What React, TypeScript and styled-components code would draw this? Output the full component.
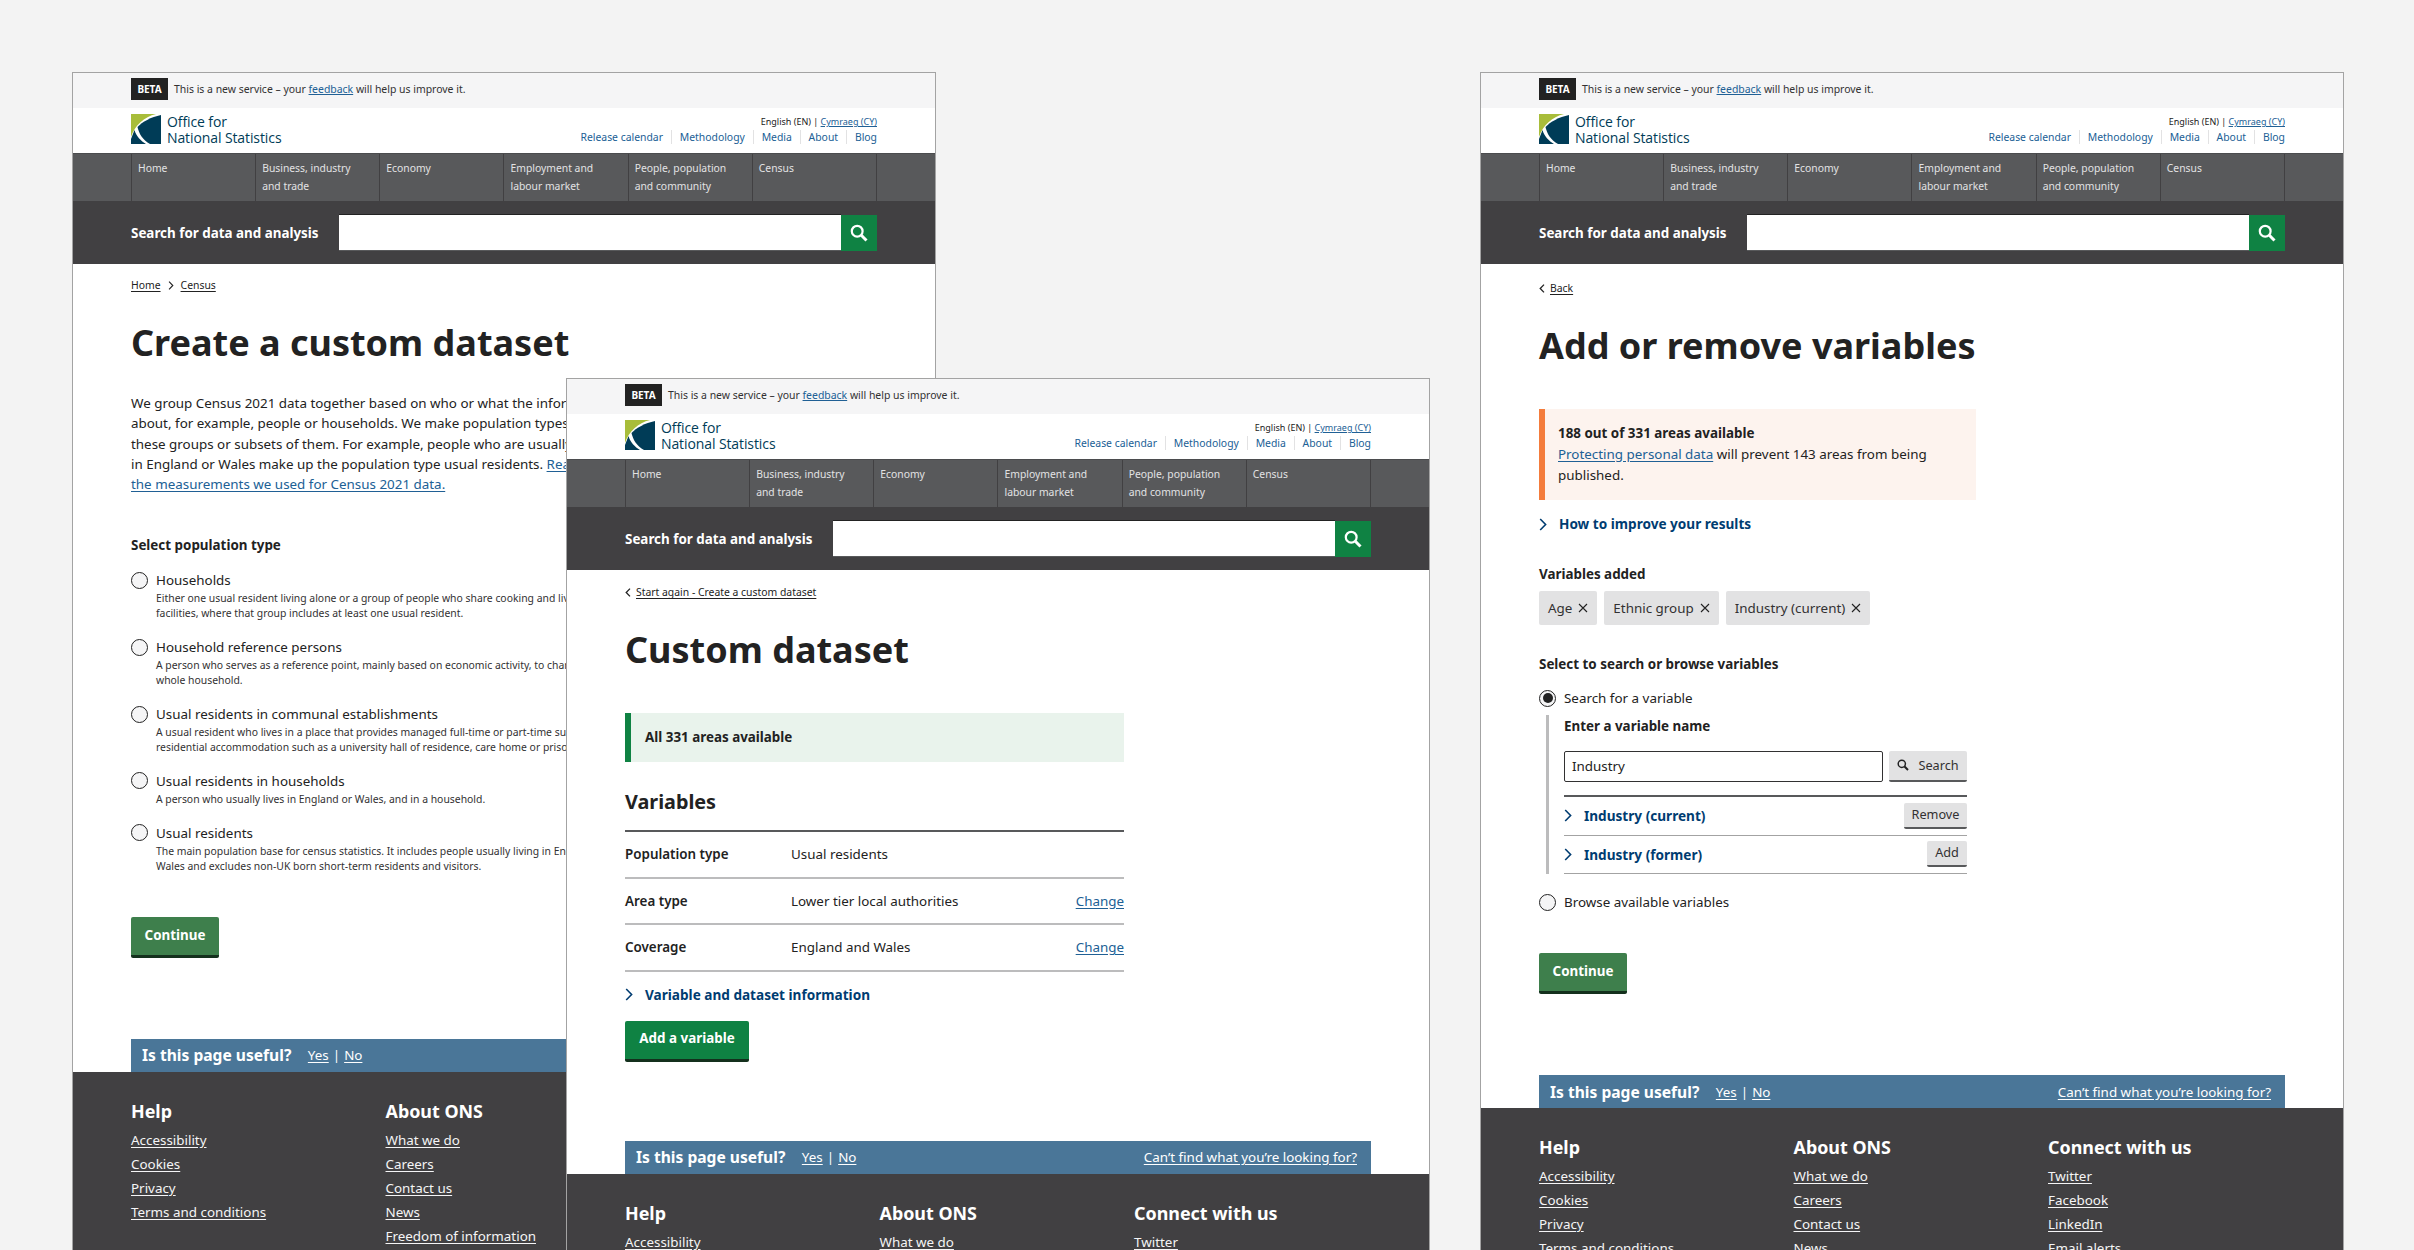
import React from "react";
import styled, { createGlobalStyle } from "styled-components";

const GlobalStyle = createGlobalStyle`
  html, body {
    margin: 0;
    height: 1250px;
    overflow: hidden;
    background: #f3f3f3;
    font-family: "Noto Sans", "Open Sans", Arial, sans-serif;
    color: #222222;
  }
  * { box-sizing: border-box; }
`;

const Canvas = styled.div`
  position: relative;
  width: 2414px;
  height: 1250px;
  overflow: hidden;
`;

const Window = styled.section<{ $left: number; $top: number; $z: number }>`
  position: absolute;
  left: ${(p) => p.$left}px;
  top: ${(p) => p.$top}px;
  z-index: ${(p) => p.$z};
  width: 864px;
  display: flex;
  flex-direction: column;
  background: #fff;
  border: 1px solid #a3a3a3;
`;

const BetaBar = styled.div`
  height: 35px;
  padding: 5px 58px 0;
  background: #f5f5f6;
  display: flex;
  align-items: flex-start;
  gap: 6px;
  font-size: 10.45px;
  line-height: 22px;
  color: #323132;
`;

const BetaBadge = styled.span`
  width: 37px;
  height: 22px;
  background: #222222;
  color: #fff;
  font-weight: 700;
  font-size: 10px;
  text-align: center;
`;

const InlineLink = styled.a`
  color: #206095;
  text-decoration: underline;
`;

const Masthead = styled.header`
  height: 45px;
  padding: 6px 58px 0;
  display: flex;
  justify-content: space-between;
`;

const Brand = styled.div`
  display: flex;
  gap: 6px;
`;

const BrandName = styled.div`
  font-family: "Open Sans", "Noto Sans", sans-serif;
  font-size: 14px;
  line-height: 16px;
  color: #003c57;
  letter-spacing: -0.1px;
`;

const MastLinks = styled.div`
  display: flex;
  flex-direction: column;
  align-items: flex-end;
  gap: 1px;
  padding-top: 1px;
`;

const LangLine = styled.div`
  font-size: 9px;
  line-height: 14px;
  color: #222;
`;

const UtilityLinks = styled.div`
  display: flex;
  font-size: 10.4px;
  line-height: 14px;
`;

const UtilityLink = styled.a`
  color: #206095;
  padding: 0 7.9px;
  border-right: 1px solid #e2e2e3;
  &:last-child {
    padding-right: 0;
    border-right: 0;
  }
`;

const Nav = styled.nav`
  height: 48px;
  padding: 0 58px;
  background: #58595b;
  border-top: 1px solid #4b4c4e;
`;

const NavList = styled.div`
  display: grid;
  grid-template-columns: repeat(6, 1fr);
  height: 100%;
  border-right: 1px solid #414042;
`;

const NavItem = styled.div`
  border-left: 1px solid #414042;
  padding: 5px 6px 0;
  font-size: 10.35px;
  line-height: 18px;
  color: #e2e2e3;
  white-space: pre-line;
`;

const SearchBand = styled.div`
  height: 63px;
  padding: 13px 58px 0;
  background: #414042;
  display: flex;
  align-items: flex-start;
`;

const SearchLabel = styled.div`
  width: 208px;
  font-size: 13.4px;
  font-weight: 700;
  line-height: 38px;
  color: #fff;
`;

const SearchInput = styled.div`
  flex: 1;
  height: 37px;
  background: #fff;
  border-top: 1px solid #222;
  border-bottom: 1px solid #58595b;
`;

const SearchButton = styled.div`
  width: 36px;
  height: 36px;
  margin-top: 1px;
  background: #0f8243;
  display: flex;
  align-items: center;
  justify-content: center;
`;

const Main = styled.main<{ $top: number }>`
  padding: ${(p) => p.$top}px 58px 0;
  display: flex;
  flex-direction: column;
  align-items: flex-start;
`;

const Crumbs = styled.div<{ $gap: number }>`
  display: flex;
  align-items: center;
  gap: ${(p) => p.$gap}px;
  font-size: 10.4px;
  line-height: 16px;
`;

const CrumbLink = styled.a`
  color: #222;
  text-decoration: underline;
  text-underline-offset: 2px;
`;

const Title = styled.h1<{ $top: number }>`
  margin: ${(p) => p.$top}px 0 0;
  font-size: 36px;
  font-weight: 700;
  line-height: 44px;
  color: #222;
`;

const Intro = styled.p`
  margin: 28px 0 0;
  font-size: 13.4px;
  line-height: 20.3px;
  white-space: nowrap;
`;

const BodyLink = styled.a`
  color: #206095;
  text-decoration: underline;
  text-underline-offset: 2px;
`;

const FieldLabel = styled.div<{ $top: number }>`
  margin-top: ${(p) => p.$top}px;
  font-size: 13.4px;
  font-weight: 700;
  line-height: 18px;
`;

const RadioGroup = styled.div<{ $top: number; $gap: number }>`
  margin-top: ${(p) => p.$top}px;
  display: flex;
  flex-direction: column;
  gap: ${(p) => p.$gap}px;
`;

const RadioRow = styled.div<{ $top?: number }>`
  display: flex;
  gap: 8px;
  margin-top: ${(p) => p.$top ?? 0}px;
`;

const RadioMark = styled.span<{ $checked?: boolean }>`
  flex: none;
  width: 17px;
  height: 17px;
  margin-top: 0.5px;
  border: 1.5px solid #222;
  border-radius: 50%;
  background: #f5f5f6;
  display: flex;
  align-items: center;
  justify-content: center;
  &::after {
    content: "";
    display: ${(p) => (p.$checked ? "block" : "none")};
    width: 10px;
    height: 10px;
    border-radius: 50%;
    background: #222;
  }
`;

const RadioText = styled.div`
  font-size: 13.4px;
  line-height: 18px;
`;

const RadioHint = styled.div`
  margin-top: 2px;
  font-size: 10.4px;
  line-height: 14.7px;
  color: #323132;
  white-space: nowrap;
`;

const PrimaryButton = styled.button<{ $top: number; $muted?: boolean; $width: number }>`
  margin-top: ${(p) => p.$top}px;
  width: ${(p) => p.$width}px;
  height: 41px;
  padding: 0 0 3px;
  border: 0;
  border-bottom: 3px solid #14301d;
  border-radius: 2px;
  background: ${(p) => (p.$muted ? "#3e7f4c" : "#0f8243")};
  color: #fff;
  font-family: inherit;
  font-size: 13.4px;
  font-weight: 700;
`;

const Feedback = styled.div<{ $top: number }>`
  margin-top: ${(p) => p.$top}px;
  width: 100%;
  height: 33px;
  padding: 0 14px 0 11px;
  background: #4a7698;
  color: #fff;
  display: flex;
  align-items: center;
  font-size: 13.4px;
`;

const FeedbackTitle = styled.strong`
  font-size: 15.6px;
  font-weight: 700;
  margin-right: 16.5px;
`;

const FeedbackLink = styled.a`
  color: #fff;
  text-decoration: underline;
  text-underline-offset: 2px;
`;

const FeedbackPipe = styled.span`
  margin: 0 4px;
`;

const FeedbackAside = styled(FeedbackLink)`
  margin-left: auto;
`;

const Footer = styled.footer`
  height: 300px;
  padding: 27px 58px 0;
  background: #414042;
  color: #fff;
  display: grid;
  grid-template-columns: 254.5px 254.5px 1fr;
  align-content: start;
`;

const FooterHeading = styled.div`
  font-size: 17.9px;
  font-weight: 700;
  line-height: 24px;
  margin-bottom: 5px;
`;

const FooterLink = styled.a`
  display: block;
  font-size: 13.4px;
  line-height: 24px;
  color: #f5f5f6;
  text-decoration: underline;
  text-underline-offset: 2px;
`;

const NoticePanel = styled.div<{ $tone: "green" | "orange"; $width: number; $top: number }>`
  margin-top: ${(p) => p.$top}px;
  width: ${(p) => p.$width}px;
  padding: ${(p) => (p.$tone === "green" ? "14px 14px" : "14px 14px 14px 13px")};
  background: ${(p) => (p.$tone === "green" ? "#e9f3ec" : "#fdf3ee")};
  border-left: 6px solid ${(p) => (p.$tone === "green" ? "#0f8243" : "#f47c3c")};
  font-size: 13.4px;
  line-height: 21px;
`;

const SummaryHeading = styled.h2`
  margin: 27px 0 0;
  font-size: 19.8px;
  font-weight: 700;
  line-height: 26px;
`;

const SummaryTable = styled.div`
  margin-top: 15px;
  width: 499px;
  border-top: 2px solid #58595b;
`;

const SummaryRow = styled.div`
  height: 46.5px;
  display: grid;
  grid-template-columns: 166px 1fr auto;
  align-items: center;
  font-size: 13.4px;
  border-bottom: 2px solid #bcbcbd;
`;

const SummaryKey = styled.div`
  font-weight: 600;
`;

const Disclosure = styled.div<{ $top: number }>`
  margin-top: ${(p) => p.$top}px;
  display: flex;
  align-items: center;
  gap: 12px;
  font-size: 13.6px;
  font-weight: 700;
  line-height: 18px;
  color: #003c71;
`;

const ChipRow = styled.div`
  margin-top: 8px;
  display: flex;
  gap: 7px;
`;

const Chip = styled.div`
  height: 34px;
  padding: 0 9px;
  border-radius: 2px;
  background: #e2e2e3;
  display: flex;
  align-items: center;
  gap: 6px;
  font-size: 13.4px;
  color: #323132;
`;

const NestedFields = styled.div`
  margin: 8px 0 0 7px;
  width: 421px;
  padding: 2px 0 0 15px;
  border-left: 3px solid #bcbcbd;
`;

const NestedHeading = styled.div`
  font-size: 13.4px;
  font-weight: 700;
  line-height: 18px;
`;

const SearchRow = styled.div`
  margin-top: 16px;
  display: flex;
  gap: 6px;
`;

const TextField = styled.div`
  width: 319px;
  height: 31px;
  padding-left: 7px;
  border: 1.5px solid #323132;
  border-radius: 2px;
  font-size: 13.4px;
  line-height: 28px;
`;

const GreyButton = styled.button<{ $width: number; $height: number }>`
  width: ${(p) => p.$width}px;
  height: ${(p) => p.$height}px;
  padding: 0 0 2px;
  border: 0;
  border-bottom: 2px solid #58595b;
  border-radius: 2px;
  background: #e2e2e3;
  color: #323132;
  font-family: inherit;
  font-size: 12.7px;
  display: flex;
  align-items: center;
  justify-content: center;
  gap: 9px;
`;

const ResultList = styled.div`
  margin-top: 13px;
  border-top: 2px solid #58595b;
`;

const ResultRow = styled.div`
  height: 38.5px;
  display: flex;
  align-items: center;
  justify-content: space-between;
  border-bottom: 1px solid #a3a3a3;
`;

const ResultTitle = styled.div`
  display: flex;
  align-items: center;
  gap: 12px;
  font-size: 13.6px;
  font-weight: 700;
  color: #003c71;
`;

const Logo = () => (
  <svg width="30" height="30" viewBox="0 0 30 30">
    <path d="M0 0H25C13 3 4 11 0 23Z" fill="#a8bd3a" />
    <path d="M30 1V30H19C12 26 8 20 6.5 13C11 8 20 3 30 1Z" fill="#003c57" />
    <path d="M0 30V25L3.5 16C5 22 10 27 15 30Z" fill="#003c57" />
  </svg>
);

const SearchIcon = ({ size, color }: { size: number; color: string }) => (
  <svg width={size} height={size} viewBox="0 0 18 18" fill="none" stroke={color}>
    <circle cx="7.2" cy="7.2" r="5.4" strokeWidth="2.2" />
    <path d="M11.3 11.3L16.5 16.5" strokeWidth="3" />
  </svg>
);

const ChevronRight = ({ color = "#003c71", w = 8, h = 13 }: { color?: string; w?: number; h?: number }) => (
  <svg width={w} height={h} viewBox="0 0 8 13" fill="none" stroke={color} strokeWidth="1.6">
    <path d="M1.2 1L6.6 6.5L1.2 12" />
  </svg>
);

const ChevronLeft = () => (
  <svg width="6" height="9" viewBox="0 0 6 9" fill="none" stroke="#222" strokeWidth="1.3">
    <path d="M5 .6L1.2 4.5L5 8.4" />
  </svg>
);

const CloseIcon = () => (
  <svg width="10" height="10" viewBox="0 0 10 10" fill="none" stroke="#222" strokeWidth="1.1">
    <path d="M1 1L9 9M9 1L1 9" />
  </svg>
);

const navItems = [
  "Home",
  "Business, industry\nand trade",
  "Economy",
  "Employment and\nlabour market",
  "People, population\nand community",
  "Census",
];

const utilityLinks = ["Release calendar", "Methodology", "Media", "About", "Blog"];

const SiteHeader = () => (
  <>
    <BetaBar>
      <BetaBadge>BETA</BetaBadge>
      <span>
        This is a new service – your <InlineLink>feedback</InlineLink> will help us improve it.
      </span>
    </BetaBar>
    <Masthead>
      <Brand>
        <Logo />
        <BrandName>
          Office for
          <br />
          National Statistics
        </BrandName>
      </Brand>
      <MastLinks>
        <LangLine>
          English (EN) | <InlineLink>Cymraeg (CY)</InlineLink>
        </LangLine>
        <UtilityLinks>
          {utilityLinks.map((l) => (
            <UtilityLink key={l}>{l}</UtilityLink>
          ))}
        </UtilityLinks>
      </MastLinks>
    </Masthead>
    <Nav>
      <NavList>
        {navItems.map((n) => (
          <NavItem key={n}>{n}</NavItem>
        ))}
      </NavList>
    </Nav>
    <SearchBand>
      <SearchLabel>Search for data and analysis</SearchLabel>
      <SearchInput />
      <SearchButton>
        <SearchIcon size={18} color="#fff" />
      </SearchButton>
    </SearchBand>
  </>
);

const footerColumns = [
  { title: "Help", links: ["Accessibility", "Cookies", "Privacy", "Terms and conditions"] },
  { title: "About ONS", links: ["What we do", "Careers", "Contact us", "News", "Freedom of information"] },
  { title: "Connect with us", links: ["Twitter", "Facebook", "LinkedIn", "Email alerts"] },
];

const SiteFooter = () => (
  <Footer>
    {footerColumns.map((c) => (
      <div key={c.title}>
        <FooterHeading>{c.title}</FooterHeading>
        {c.links.map((l) => (
          <FooterLink key={l}>{l}</FooterLink>
        ))}
      </div>
    ))}
  </Footer>
);

const FeedbackBar = ({ top }: { top: number }) => (
  <Feedback $top={top}>
    <FeedbackTitle>Is this page useful?</FeedbackTitle>
    <FeedbackLink>Yes</FeedbackLink>
    <FeedbackPipe>|</FeedbackPipe>
    <FeedbackLink>No</FeedbackLink>
    <FeedbackAside>Can’t find what you’re looking for?</FeedbackAside>
  </Feedback>
);

const populationTypes = [
  {
    label: "Households",
    hint: ["Either one usual resident living alone or a group of people who share cooking and living", "facilities, where that group includes at least one usual resident."],
  },
  {
    label: "Household reference persons",
    hint: ["A person who serves as a reference point, mainly based on economic activity, to characterise the", "whole household."],
  },
  {
    label: "Usual residents in communal establishments",
    hint: ["A usual resident who lives in a place that provides managed full-time or part-time supervision and", "residential accommodation such as a university hall of residence, care home or prison."],
  },
  {
    label: "Usual residents in households",
    hint: ["A person who usually lives in England or Wales, and in a household."],
  },
  {
    label: "Usual residents",
    hint: ["The main population base for census statistics. It includes people usually living in England and", "Wales and excludes non-UK born short-term residents and visitors."],
  },
];

const CreateDataset = () => (
  <Window $left={72} $top={72} $z={1}>
    <SiteHeader />
    <Main $top={13}>
      <Crumbs $gap={7}>
        <CrumbLink>Home</CrumbLink>
        <ChevronRight color="#222" w={6} h={9} />
        <CrumbLink>Census</CrumbLink>
      </Crumbs>
      <Title $top={28}>Create a custom dataset</Title>
      <Intro>
        We group Census 2021 data together based on who or what the information is
        <br />
        about, for example, people or households. We make population types from
        <br />
        these groups or subsets of them. For example, people who are usually resident
        <br />
        in England or Wales make up the population type usual residents. <BodyLink>Read more about</BodyLink>
        <br />
        <BodyLink>the measurements we used for Census 2021 data.</BodyLink>
      </Intro>
      <FieldLabel $top={42}>Select population type</FieldLabel>
      <RadioGroup $top={17} $gap={17.4}>
        {populationTypes.map((t) => (
          <RadioRow key={t.label}>
            <RadioMark />
            <RadioText>
              {t.label}
              <RadioHint>
                {t.hint.map((line) => (
                  <div key={line}>{line}</div>
                ))}
              </RadioHint>
            </RadioText>
          </RadioRow>
        ))}
      </RadioGroup>
      <PrimaryButton $top={44} $width={88} $muted>
        Continue
      </PrimaryButton>
      <FeedbackBar top={80.5} />
    </Main>
    <SiteFooter />
  </Window>
);

const CustomDataset = () => (
  <Window $left={566} $top={378} $z={2}>
    <SiteHeader />
    <Main $top={14}>
      <Crumbs $gap={5}>
        <ChevronLeft />
        <CrumbLink>Start again - Create a custom dataset</CrumbLink>
      </Crumbs>
      <Title $top={28}>Custom dataset</Title>
      <NoticePanel $tone="green" $width={499} $top={41}>
        <strong>All 331 areas available</strong>
      </NoticePanel>
      <SummaryHeading>Variables</SummaryHeading>
      <SummaryTable>
        <SummaryRow>
          <SummaryKey>Population type</SummaryKey>
          <div>Usual residents</div>
        </SummaryRow>
        <SummaryRow>
          <SummaryKey>Area type</SummaryKey>
          <div>Lower tier local authorities</div>
          <BodyLink>Change</BodyLink>
        </SummaryRow>
        <SummaryRow>
          <SummaryKey>Coverage</SummaryKey>
          <div>England and Wales</div>
          <BodyLink>Change</BodyLink>
        </SummaryRow>
      </SummaryTable>
      <Disclosure $top={14}>
        <ChevronRight />
        Variable and dataset information
      </Disclosure>
      <PrimaryButton $top={17} $width={124}>
        Add a variable
      </PrimaryButton>
      <FeedbackBar top={79} />
    </Main>
    <SiteFooter />
  </Window>
);

const AddRemoveVariables = () => (
  <Window $left={1480} $top={72} $z={1}>
    <SiteHeader />
    <Main $top={16}>
      <Crumbs $gap={5}>
        <ChevronLeft />
        <CrumbLink>Back</CrumbLink>
      </Crumbs>
      <Title $top={28}>Add or remove variables</Title>
      <NoticePanel $tone="orange" $width={437} $top={41}>
        <strong>188 out of 331 areas available</strong>
        <br />
        <BodyLink>Protecting personal data</BodyLink> will prevent 143 areas from being published.
      </NoticePanel>
      <Disclosure $top={15}>
        <ChevronRight />
        How to improve your results
      </Disclosure>
      <FieldLabel $top={32}>Variables added</FieldLabel>
      <ChipRow>
        <Chip>
          Age <CloseIcon />
        </Chip>
        <Chip>
          Ethnic group <CloseIcon />
        </Chip>
        <Chip>
          Industry (current) <CloseIcon />
        </Chip>
      </ChipRow>
      <FieldLabel $top={30}>Select to search or browse variables</FieldLabel>
      <RadioGroup $top={16} $gap={0}>
        <RadioRow>
          <RadioMark $checked />
          <RadioText>Search for a variable</RadioText>
        </RadioRow>
        <NestedFields>
          <NestedHeading>Enter a variable name</NestedHeading>
          <SearchRow>
            <TextField>Industry</TextField>
            <GreyButton $width={78} $height={31}>
              <SearchIcon size={12} color="#222" />
              Search
            </GreyButton>
          </SearchRow>
          <ResultList>
            <ResultRow>
              <ResultTitle>
                <ChevronRight />
                Industry (current)
              </ResultTitle>
              <GreyButton $width={63} $height={26}>
                Remove
              </GreyButton>
            </ResultRow>
            <ResultRow>
              <ResultTitle>
                <ChevronRight />
                Industry (former)
              </ResultTitle>
              <GreyButton $width={40} $height={26}>
                Add
              </GreyButton>
            </ResultRow>
          </ResultList>
        </NestedFields>
        <RadioRow $top={19}>
          <RadioMark />
          <RadioText>Browse available variables</RadioText>
        </RadioRow>
      </RadioGroup>
      <PrimaryButton $top={42} $width={88} $muted>
        Continue
      </PrimaryButton>
      <FeedbackBar top={81} />
    </Main>
    <SiteFooter />
  </Window>
);

export default function App() {
  return (
    <Canvas>
      <GlobalStyle />
      <CreateDataset />
      <CustomDataset />
      <AddRemoveVariables />
    </Canvas>
  );
}
